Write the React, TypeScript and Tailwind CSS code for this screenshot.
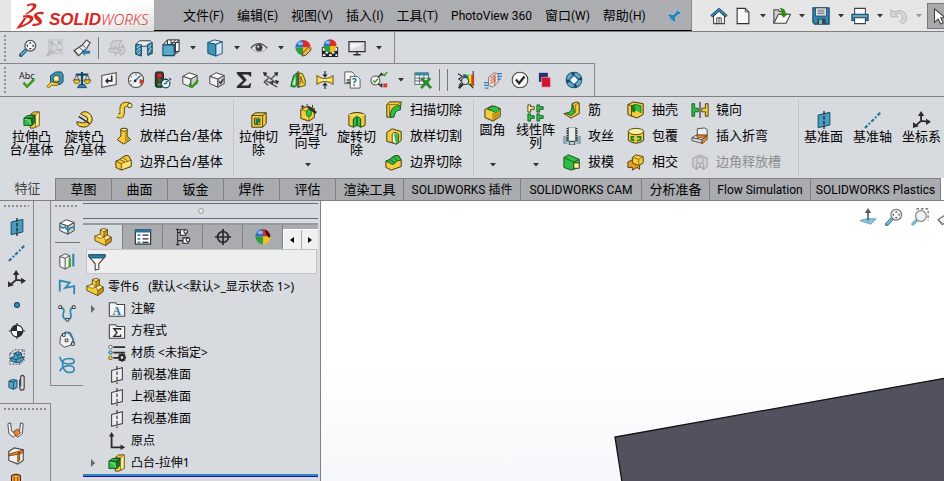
import React, { useState } from 'react';

const Y = '#f4cd3d';
const YD = '#c9941b';
const YL = '#fdf0a0';
const G = '#2fbf45';
const GD = '#14812a';
const B = '#2f88b0';
const BD = '#134a66';
const K = '#2b2b2b';

const Cube = ({ top = '#fff', left = '#f1f1f1', right = '#cfcfcf', line = '#444' }) => (
  <g stroke={line} strokeWidth="1.1" strokeLinejoin="round">
    <path d="M2 6 9 2l9 3-7 4z" fill={top} />
    <path d="M2 6l9 3v9l-9-4z" fill={left} />
    <path d="M11 9l7-4v9l-7 4z" fill={right} />
  </g>
);

const Lens = () => (
  <>
    <path d="M2 18l6.5-6.5" stroke={BD} strokeWidth="4" strokeLinecap="round" />
    <path d="M2.5 17.5l5-5" stroke="#58aed0" strokeWidth="2" strokeLinecap="round" />
    <circle cx="12.5" cy="7.5" r="6" fill="#f1f6f8" stroke="#555" strokeWidth="1.4" />
  </>
);

const Ball = () => (
  <>
    <path d="M10 9.5V1A8.5 8.5 0 0 0 1.5 9.5z" fill="#2a6ed0" />
    <path d="M10 9.5h8.5A8.5 8.5 0 0 0 10 1z" fill="#e02a25" />
    <path d="M10 9.5H1.5A8.5 8.5 0 0 0 10 18z" fill="#2c9f3c" />
    <path d="M10 9.5V18a8.5 8.5 0 0 0 8.5-8.5z" fill="#f3bd25" />
    <ellipse cx="7" cy="5" rx="3" ry="2" fill="#fff" opacity=".5" />
  </>
);

const Plane = () => (
  <>
    <path d="M3.5 4.5l13-3v14l-13 3z" fill="#4b9cc0" stroke={BD} strokeWidth="1.1" />
    <path d="M10 0v20" stroke="#111" strokeWidth="1.3" strokeDasharray="4 1.5" />
  </>
);

const Axes = () => (
  <g stroke={K} fill={K} strokeWidth="2">
    <path d="M9 11V3M9 11l9 1M9 11l-7 6" fill="none" />
    <path d="M5.5 5.500L9 0l3.500 5.500zM14.500 8.500l5.500 3.500-5.500 3.500zM0 12.500v6.500l6.500-2z" stroke="none" />
  </g>
);

const icons: Record<string, React.ReactNode> = {
  zoomFit: (
    <>
      <Lens />
      <path d="M12.500 3l1.600 2h-3.200zM12.500 12l1.600-2h-3.200zM8 7.500l2-1.600v3.200zM17 7.500l-2-1.600v3.200z" fill={K} />
    </>
  ),
  zoomArea: (
    <>
      <path d="M3 1h15v15H3z" fill="none" stroke="#b8bbbf" />
      <path d="M5 3l3 3M16 3l-3 3M16 14l-3-3M5 3h3M5 3v3M16 3h-3M16 3v3M16 14v-3" stroke="#b0b3b7" strokeWidth="1.400" />
      <path d="M2 18l5-5" stroke="#b8bbbf" strokeWidth="3.500" strokeLinecap="round" />
      <circle cx="9" cy="10" r="4" fill="#d2d4d8" stroke="#b8bbbf" strokeWidth="1.300" />
    </>
  ),
  prevView: (
    <>
      <path d="M1 13l9-6 5-6 4 3-4 7-9 7.500z" fill="#eee" stroke="#444" strokeWidth="1.200" />
      <path d="M1.500 13q2.500 1 4 4.500M7 9.500q2.500 1 4 4M10.500 7q2 .5 3.500 3" fill="none" stroke="#555" />
      <path d="M9 14.500l4.500-4v2.500H19v3.500h-5.500V19z" fill="#2b7ba6" />
    </>
  ),
  rotateGray: (
    <g stroke="#b3b6ba" fill="#cfd1d5" strokeWidth="1.200">
      <path d="M3 5l3-3h9l-2 3v5H3z" />
      <path d="M1 11h7v-3l4 5-4 5v-3H4q-3 0-3-4zM12 9h4V6l3 5q0 5-5 7l-2-3q3-1 3-3h-3z" />
    </g>
  ),
  section: (
    <>
      <path d="M1 6l4-4h12l3 3v10l-5 3V8H7v10l-6-1z" fill="#e9eef0" stroke={K} strokeWidth="1" />
      <path d="M1 6h6v13l-6-2zM14 6l5-2v12l-5 2z" fill={B} stroke={BD} />
      <path d="M2 10l4-4M2 14l4-4M3 17l3-3M15 10l3-4M15 15l3-5" stroke="#d5edf6" />
    </>
  ),
  viewCube: (
    <>
      <path d="M6 1h13v13h-5V6H6z" fill="#fff" stroke={K} strokeWidth="1.100" />
      <path d="M10 1v5M10 4h9M15 1l-4 5M15 4v12" stroke={K} />
      <path d="M1 6.500h12.500v12H1z" fill="#58a9ca" stroke={BD} strokeWidth="1.200" />
      <path d="M1 6.500l5-5.500M13.500 6.500L19 1M13.500 18l5.500-5" stroke={K} strokeWidth="1.100" />
    </>
  ),
  display: (
    <g stroke={BD} strokeLinejoin="round">
      <path d="M2 4l7-3 9 2-7 3z" fill="#dff2fa" />
      <path d="M2 4l9 2v13l-9-3z" fill="#3f94ba" />
      <path d="M11 6l7-3v13l-7 3z" fill="#cfe9f4" />
    </g>
  ),
  eye: (
    <>
      <path d="M1 10Q10 1 19 10 10 19 1 10z" fill="#e8e8e8" stroke="#999" />
      <path d="M1 10Q10 0 19 10" fill="none" stroke="#444" strokeWidth="1.300" />
      <circle cx="10" cy="9.500" r="4" fill="#444" />
      <circle cx="9" cy="8.500" r="1.200" fill="#ddd" />
    </>
  ),
  appearance: (
    <>
      <Ball />
      <path d="M9 19l1-4 6-6 3 3-6 6z" fill="#f0b93a" stroke="#4a3510" />
      <path d="M16 9l1-1.500 3 2.500-1 2z" fill="#dd6f7d" />
    </>
  ),
  ballBlack: (
    <>
      <Ball />
      <path d="M12 2q6 3 6 9-4-1-6-9z" fill="#111" />
    </>
  ),
  scene: (
    <>
      <path d="M1 9h18v11H1z" fill="#222" />
      <path d="M2 10h3v3H2zM15 10h3v3h-3zM5 14h3v2H5zM12 14h3v2h-3zM2 17h3v2H2zM9 17h3v2H9zM16 17h2v2h-2z" fill="#fff" />
      <g transform="translate(1.500 -.5) scale(.86)">
        <Ball />
      </g>
    </>
  ),
  monitor: (
    <>
      <path d="M1 3h18v11H1z" fill="#d9dbde" stroke="#333" strokeWidth="1.300" />
      <path d="M3 5h14L3 12z" fill="#f4f4f4" />
      <path d="M10 14v3M6 17.500h8" stroke={K} strokeWidth="1.600" />
    </>
  ),
  spell: (
    <>
      <text x="0" y="8.500" fontSize="10" fill="#222" fontFamily="Noto Sans, sans-serif">Abc</text>
      <path d="M5 13l4 4.500L17 9" fill="none" stroke="#3c9a1e" strokeWidth="2.800" />
    </>
  ),
  tape: (
    <>
      <path d="M5 5l6-4h6l2 3v8l-3 3H7l-2-2z" fill="#3c8fb5" stroke={BD} />
      <circle cx="11.500" cy="8.500" r="3.800" fill="#efd15a" stroke={BD} />
      <circle cx="11.500" cy="8.500" r="1.500" fill="#fff" />
      <path d="M1 17l5-5 9 2-2 2H6l-3 3z" fill={Y} stroke="#57430c" strokeWidth=".8" />
    </>
  ),
  scales: (
    <>
      <path d="M10 1v16M3 4h14" stroke={BD} strokeWidth="2.400" />
      <path d="M5 18.500h10l-2-3.500H7z" fill={B} stroke={BD} />
      <path d="M4 4L1.500 10h5zM16 4l-2.500 6h5z" fill="none" stroke="#555" />
      <path d="M0 10h8q-1 4-4 4t-4-4zM12 10h8q-1 4-4 4t-4-4z" fill={Y} stroke="#57430c" strokeWidth=".9" />
    </>
  ),
  sectionProp: (
    <>
      <path d="M2 5l16-3v13L2 18z" fill="#f4f4f4" stroke="#555" strokeWidth="1.300" />
      <path d="M13 5v6H8" fill="none" stroke={K} strokeWidth="1.800" />
      <path d="M9 7.500v7L5.500 11z" fill={K} />
    </>
  ),
  gauge: (
    <>
      <circle cx="10" cy="10" r="8.500" fill="#f3f3f3" stroke="#555" strokeWidth="1.300" />
      <path d="M10 3v2M4 6l1.500 1M3 11h2M5 15l1-1M15 15l-1-1" stroke={K} />
      <path d="M8 12l7-7" stroke="#2b7ba6" strokeWidth="1.800" />
      <path d="M14 9l4 1-1 5-3-2z" fill="#e02c1c" />
      <circle cx="9" cy="11" r="1.500" fill={K} />
    </>
  ),
  traffic: (
    <>
      <rect x="1.500" y="1" width="9" height="17" rx="2" fill="#3c3c3c" stroke="#111" />
      <circle cx="6" cy="5" r="2.600" fill="#e1281d" />
      <circle cx="6" cy="10" r="2" fill="#6b5b18" />
      <circle cx="6" cy="15" r="2" fill="#24a03b" />
      <circle cx="13" cy="14" r="4.700" fill="#f3f3f3" stroke={BD} strokeWidth="1.300" />
      <path d="M13 8v2M13 14l2-3M13 14h-2M17 8l2 2" stroke={BD} strokeWidth="1.400" />
    </>
  ),
  cubeCheck: (
    <>
      <Cube />
      <path d="M9 14l3.500 3.500L19 10" fill="none" stroke="#3c9a1e" strokeWidth="2.600" />
    </>
  ),
  cubeSmallCheck: (
    <>
      <Cube />
      <path d="M12.500 11.500l1.500 2 3-4.500" fill="none" stroke={K} strokeWidth="1.600" />
    </>
  ),
  sigma: <path d="M2 1h16v5h-1.500q-.5-2-3-2H8l5 6-6 6h6.500q2.500 0 3-2.500H18L17 19H2v-2L9 10.500 2 3z" fill={K} />,
  dimension: (
    <>
      <path d="M2 3l8 6 6-6M3 10l14 8M10 9l6 5M2 12l5 4M7 8l-5 5" stroke="#555" strokeWidth="1.500" fill="none" />
      <path d="M1 1l5 1-3 4zM13 2l5-1-1 5zM14 10l5 1-2 4zM8 12l5-1-1 4z" fill={K} />
    </>
  ),
  draftAnalysis: (
    <>
      <path d="M2 17l3-12 4-3v14l-3 2z" fill={G} stroke="#14501e" />
      <path d="M4 15l3-9v9z" fill="#eef7ee" />
      <path d="M11 2l4 1 3 7v6l-7 2z" fill={Y} stroke="#57430c" />
      <path d="M10 0v19" stroke={K} strokeWidth="1.200" />
      <path d="M13 6l3 8M13 6v8" stroke="#7b5c0f" />
    </>
  ),
  thickness: (
    <>
      <path d="M1 5q9 7 18 0v10q-9-7-18 0z" fill={Y} stroke="#57430c" strokeWidth=".9" />
      <path d="M2 10h16" stroke={YL} strokeWidth="1.500" />
      <path d="M10 0v5M10 20v-5" stroke={K} strokeWidth="1.400" />
      <path d="M7 4h6l-3 3.500zM7 16h6l-3-3.500z" fill={K} />
    </>
  ),
  compareDoc: (
    <>
      <path d="M2 1h8l3 3v10H2z" fill="#f5f5f5" stroke="#555" />
      <path d="M8 6h8l3 3v10H8z" fill="#f5f5f5" stroke="#555" />
      <path d="M4 10h4M4 12.500h4" stroke="#111" strokeWidth="1.300" />
      <text x="10" y="17" fontSize="11" fontWeight="700" fill="#1f6f99" fontFamily="Noto Sans, sans-serif">?</text>
    </>
  ),
  checkActive: (
    <>
      <circle cx="6" cy="10.500" r="5" fill="#f3f3f3" stroke="#555" strokeWidth="1.200" />
      <path d="M3.500 10.500l2 2 3.500-4" stroke="#3c9a1e" strokeWidth="1.600" fill="none" />
      <path d="M9 7l4-4M9 14l4 3M12 2l2 3M13 14v4" stroke={K} strokeWidth="1.600" />
      <path d="M14 3l2 2 3-4" stroke="#3c9a1e" strokeWidth="1.700" fill="none" />
      <path d="M15 14l4 4M19 14l-4 4" stroke="#dd3418" strokeWidth="2" />
    </>
  ),
  excel: (
    <>
      <path d="M1 2h15v13H1z" fill="#f7f7f7" stroke="#57646b" />
      <path d="M1 2h15v3H1z" fill={B} />
      <path d="M1 8h15M1 11h15M6 5v10M11 5v10" stroke="#57646b" />
      <path d="M8 8l11 11M18 8L8 19" stroke="#2d8a2b" strokeWidth="3" />
    </>
  ),
  rainbow: (
    <>
      <path d="M7 3l12 2v12L9 15z" fill="#46c349" />
      <path d="M7 4q3 0 5 2l-2 8-3-1z" fill="#2e4fc4" />
      <path d="M13 5l3-1v12l-3-2z" fill="#f2dd23" />
      <path d="M16 4l3 1v12l-3-2z" fill="#e4361d" />
      <path d="M1 3l5 3-4 3 4 3-4 4M18 0v5" stroke={K} fill="none" strokeWidth="1.200" />
      <path d="M2 19l5-5" stroke={K} strokeWidth="2.500" />
      <circle cx="9" cy="11" r="4" fill="#cfe0ea" stroke="#444" strokeWidth="1.300" />
      <path d="M14 14l4 5" stroke="#333" strokeWidth="1.500" />
    </>
  ),
  flow: (
    <>
      <path d="M5 7l6-5 5 1v9l-6 6-5-2z" fill="#f3d9cf" stroke="#777" />
      <path d="M7 8l6-4M7 11l6-4M7 14l6-4" stroke="#e0755b" strokeWidth="1.400" />
      <path d="M0 13h5M0 16h5M1 19h4M15 3h5M15 6h5M15 9h4" stroke="#2b82c7" strokeWidth="1.300" />
      <path d="M12 5v11" stroke="#666" />
    </>
  ),
  roundCheck: (
    <>
      <circle cx="10" cy="10" r="8.700" fill="#f7f7f7" stroke="#444" strokeWidth="1.200" />
      <path d="M5.500 9.500l3.500 4 6-7.500" fill="none" stroke={K} strokeWidth="2.600" />
    </>
  ),
  squares: (
    <>
      <path d="M1 2h10v10H1z" fill="#25306f" />
      <path d="M4 7h10v11H4z" fill="#cf1731" stroke="#e8dde2" strokeWidth=".6" />
    </>
  ),
  ring: (
    <>
      <circle cx="10" cy="10" r="6.500" fill="none" stroke={BD} strokeWidth="5.500" />
      <circle cx="10" cy="10" r="6.500" fill="none" stroke="#62a8c7" strokeWidth="3.500" strokeDasharray="7 3.200" />
      <path d="M10 5l5 5-5 5-5-5z" fill="#eef5f8" stroke={BD} />
    </>
  ),
  home: (
    <>
      <path d="M4 10v8.500h12V10l-6-6z" fill="#fff" stroke="#444" strokeWidth="1.200" />
      <path d="M7.500 18v-6h5v6M10 12v6" fill="none" stroke="#444" strokeWidth="1.100" />
      <path d="M1.500 10.500L10 3l8.500 7.500" fill="none" stroke={BD} strokeWidth="3.400" />
      <path d="M2 10L10 3l8 7" fill="none" stroke="#3b93bb" strokeWidth="1.500" />
    </>
  ),
  newDoc: (
    <>
      <path d="M3.500 1.500h9l4 4v13h-13z" fill="#f8f8f8" stroke="#333" strokeWidth="1.200" />
      <path d="M12.500 1.500v4h4" fill="none" stroke="#444" />
    </>
  ),
  open: (
    <>
      <path d="M1 18V3h5l1 2h5v5" fill="#cfd1d2" stroke="#444" strokeWidth="1.200" />
      <path d="M1 18L6 8h13.500l-5 10z" fill="#f6f6f6" stroke="#444" strokeWidth="1.200" />
      <path d="M7 1q7 0 7 6h3l-5 5-5-5h3q0-4-3-6z" fill="#358a14" />
    </>
  ),
  save: (
    <>
      <path d="M1 1h18v18H3l-2-2z" fill={B} stroke={BD} strokeWidth="1.300" />
      <path d="M4 1h12v9H4z" fill="#f5f5f5" stroke={BD} />
      <path d="M6 3.500h8M6 5.500h8M6 7.500h8" stroke="#555" />
      <path d="M6 13h9v6H6z" fill="#3b464c" />
      <path d="M8 14h3v5H8z" fill="#86b9d2" />
    </>
  ),
  print: (
    <>
      <path d="M4 8V1.500h12V8" fill="#f8f8f8" stroke="#444" strokeWidth="1.200" />
      <path d="M1 8h18v7H1z" fill={B} stroke={BD} strokeWidth="1.200" />
      <path d="M4 12h12v6.500H4z" fill="#fff" stroke="#444" strokeWidth="1.200" />
      <path d="M2 10h16" stroke="#9fd2e8" />
    </>
  ),
  undo: (
    <path d="M1 3v8h8L6 8q7-3 8 3 0 3-3 5l3 3q5-3 4-9Q16 1 4 5.500z" fill="#d7d8da" stroke="#aeb0b3" />
  ),
  cursor: <path d="M5 2v15l4-3.500 3 5.500 2.500-1.500L12 12h5z" fill="#fff" stroke="#444" strokeWidth="1.200" />,
  pin: (
    <path
      d="M11 2l6 4.500-1.500 2L14 8l-3.500 3.500.5 4.500-2 1-3-3-5 4 4-5.500-3-3 1.500-2 4.500 1L11.500 5z"
      fill="#2b82b5"
      stroke="#c5dbe8"
      strokeWidth=".7"
    />
  ),
  extrude: (
    <>
      <path d="M8 4l4-3h6v15l-6 3H8z" fill={Y} stroke="#4a390a" />
      <path d="M8 4h6v14l4-2V1l-4 3" stroke="#8c6b13" fill={YL} />
      <path d="M1 8l4-3h8l-3 3zM1 8h9v8H1z" fill={G} stroke="#104a1b" />
      <path d="M10 8l3-3v8l-3 3z" fill={GD} stroke="#104a1b" />
      <path d="M2 9l4 1 3 5" stroke="#9bec9c" fill="none" />
    </>
  ),
  revolve: (
    <>
      <path d="M5 3q4-4 9-1 6 5 3 11-5 7-13 4-4-2-3-5l5 1q5 1 7-3 0-4-3-4z" fill={Y} stroke="#4a390a" strokeWidth="1.100" />
      <path d="M3 6l12 8" stroke={K} strokeWidth="1.600" />
      <path d="M12 3q5 3 3 8" stroke={YL} fill="none" strokeWidth="1.300" />
    </>
  ),
  sweep: (
    <>
      <path d="M3 16q5 2 5-3 0-4 0-6 1-4 8-3" fill="none" stroke="#4a390a" strokeWidth="5.800" />
      <path d="M3 16q5 2 5-3 0-4 0-6 1-4 8-3" fill="none" stroke={Y} strokeWidth="4" />
      <circle cx="16.500" cy="5" r="2.500" fill={YL} stroke="#4a390a" />
      <path d="M7 9v5" stroke={YL} />
    </>
  ),
  loft: (
    <>
      <path d="M6.500 2h7v8l4 4-8 5-7-5 4-4z" fill={Y} stroke="#4a390a" strokeWidth="1.100" />
      <ellipse cx="10" cy="3" rx="3.500" ry="1.700" fill={YL} stroke="#4a390a" />
      <path d="M11 5v13l5-4-3-4V4z" fill={YD} />
    </>
  ),
  boundary: (
    <>
      <path d="M1 9q4-1 7-4t7-2l3 5v7l-11 4-6-3z" fill={Y} stroke="#4a390a" strokeWidth="1.100" />
      <path d="M1 9l6 3 11-4M7 12v7M5 7l6 3M9 5l5 4" fill="none" stroke="#6d540f" />
      <path d="M8 12l9-3v5l-9 4z" fill="#fae27a" />
    </>
  ),
  cutExtrude: (
    <>
      <path d="M2 5l4-3h12v12l-4 4H2z" fill={Y} stroke="#4a390a" strokeWidth="1.100" />
      <path d="M2 5h12v13M14 5l4-3" fill="none" stroke="#4a390a" />
      <path d="M5 8h6v7H5z" fill="#fff" stroke="#4a390a" />
      <path d="M6 15V9h5v3l-3 3z" fill={GD} />
    </>
  ),
  holeWizard: (
    <>
      <path d="M2 6l6-3 9 2v10l-6 4-9-3z" fill={Y} stroke="#4a390a" strokeWidth="1.100" />
      <path d="M2 6l9 3v10M11 9l6-4" fill="none" stroke="#8a6912" />
      <ellipse cx="11" cy="10" rx="3" ry="4" fill={G} stroke={GD} />
      <path d="M10 3l9 7" stroke={K} strokeWidth="2.800" />
      <path d="M4 1v4M2 3h4M9 0v3M15 1v3" stroke={K} />
    </>
  ),
  cutRevolve: (
    <>
      <path d="M1 4q9-5 18 0v12l-5 2V9l-4-3-4 3v9l-5-2z" fill={Y} stroke="#4a390a" strokeWidth="1.100" />
      <path d="M6 9l4-4v11l-4 2zM14 9l-4-4v11l4 2z" fill={G} stroke="#145a22" />
      <path d="M1 4q9 3 18 0" stroke={YL} fill="none" />
    </>
  ),
  sweepCut: (
    <>
      <path d="M2 4l3-3h13l-1 8-6 1-3 8H2z" fill={Y} stroke="#4a390a" strokeWidth="1.100" />
      <path d="M6 18Q5 5 17 5v5q-6 0-7 8z" fill={G} stroke="#145a22" />
      <path d="M2 4h13l3-3M5 5v12" fill="none" stroke="#8a6912" />
    </>
  ),
  loftCut: (
    <>
      <path d="M2 6l6-4 10 3v10l-5 4-11-3z" fill={Y} stroke="#4a390a" strokeWidth="1.100" />
      <path d="M8 8q3-4 7 0v9l-3 2-4-2z" fill="#f4f4f4" stroke="#4a390a" />
      <path d="M10 8q2-2 4 0l1 9-3 1z" fill={G} />
    </>
  ),
  boundaryCut: (
    <>
      <path d="M1 9q4-1 7-4t7-2l3 5v7l-11 4-6-3z" fill={Y} stroke="#4a390a" strokeWidth="1.100" />
      <path d="M1 9q4-1 7-4t7-2l3 5q-5 0-7 3t-4 1z" fill={G} stroke="#145a22" />
      <path d="M5 7l6 4M9 4l5 5" stroke="#145a22" />
    </>
  ),
  fillet: (
    <>
      <path d="M1 6l8-4 9 3v9l-8 5-9-4z" fill={Y} stroke="#4a390a" strokeWidth="1.100" />
      <path d="M4 6q5-5 10-3l4 3-5 4q-3-3-9-4z" fill={G} stroke="#145a22" />
      <path d="M10 10v9" stroke="#8a6912" />
      <path d="M11 11l6-4v6l-6 5z" fill={YD} />
    </>
  ),
  linearPattern: (
    <g strokeWidth="1">
      <path d="M1 1h3v2h4v3H4v3H1z" fill={YL} stroke="#4a390a" />
      <path d="M11 1h3v2h4v3h-4v3h-3zM1 11h3v2h4v3H4v3H1zM11 11h3v2h4v3h-4v3h-3z" fill={G} stroke="#145a22" />
    </g>
  ),
  rib: (
    <>
      <path d="M1 14l9-2V3l5-2 3 1v12l-9 5z" fill={Y} stroke="#4a390a" strokeWidth="1.100" />
      <path d="M4 14q6-2 7-10l2 9-4 3z" fill={G} stroke="#145a22" />
      <path d="M18 2l-4 2v9" stroke="#8a6912" fill="none" />
    </>
  ),
  tap: (
    <>
      <path d="M0 10h5v9H0zM15 10h5v9h-5z" fill="#8fa9b8" />
      <path d="M6 0h8v16H6z" fill="#e8e8e8" stroke="#777" />
      <path d="M5 1v15M15 1v15" stroke="#222" strokeWidth="2" strokeDasharray="1.600 1" />
      <path d="M7 16h6v4H7z" fill="#a7d6ec" stroke="#333" />
    </>
  ),
  draft: (
    <>
      <path d="M1 5l5-3 12 5v9l-9 3-8-3z" fill={G} stroke="#145a22" strokeWidth="1.100" />
      <path d="M1 5l11 5 6-3M12 10v8" fill="none" stroke="#145a22" />
      <path d="M12 11h6v6h-6z" fill={YL} stroke="#4a390a" />
    </>
  ),
  shell: (
    <>
      <path d="M1 4l6-3 11 2v12l-7 4-10-4z" fill={Y} stroke="#4a390a" strokeWidth="1.100" />
      <path d="M5 5l4-2 7 2v9l-6-4-2 3-3-2z" fill={GD} />
      <path d="M9 4l6 2v7l-6-4z" fill={G} />
      <path d="M1 4l4 1v12" fill="none" stroke="#4a390a" />
    </>
  ),
  wrap: (
    <>
      <path d="M1.500 5v10q8.500 6 17 0V5z" fill={Y} stroke="#4a390a" strokeWidth="1.100" />
      <ellipse cx="10" cy="5" rx="8.500" ry="3.500" fill={YL} stroke="#4a390a" />
      <path d="M4 10h4v2H6v1h2v3L4 15zM11 10h5v5l-5 1v-2h3v-2h-3z" fill={GD} />
    </>
  ),
  intersect: (
    <>
      <path d="M1 10l6-3 10 4-3 2v5l-3-2-5 3v-3H1z" fill="#ea9a22" stroke="#4a390a" />
      <path d="M6 5l4-3 8 2v7l-5 3-7-3z" fill={Y} stroke="#4a390a" />
      <path d="M6 5l7 2v7M13 7l5-3" stroke="#8a6912" fill="none" />
    </>
  ),
  mirror: (
    <>
      <path d="M1 3h3v5h4v4H4v5H1z" fill={G} stroke="#145a22" />
      <path d="M19 3h-3v5h-4v4h4v5h3z" fill={Y} stroke="#4a390a" />
      <path d="M10 1v18" stroke={K} strokeWidth="1.300" />
    </>
  ),
  bend: (
    <>
      <path d="M7 2l8-1 3 2v7l-9 1-2-3z" fill="#eee" stroke="#444" />
      <path d="M1 12l5-3h12l-6 5z" fill="#f4f4f4" stroke="#444" />
      <path d="M6 9h11l-1 2-9 1zM12 14l6-4v4l-6 5z" fill="#ea8a36" stroke="#6d3a0d" strokeWidth=".8" />
      <path d="M1 12l11 2v4L1 15z" fill="#ddd" stroke="#444" />
    </>
  ),
  corner: (
    <g fill="#d0d2d5" stroke="#a5a7aa" strokeWidth="1.200">
      <path d="M2 6l8-4 8 4v9l-4 3-4-3-4 3-4-3z" />
      <circle cx="10" cy="8" r="3.500" />
      <path d="M6 18v-7M14 18v-7M10 11v5" />
    </g>
  ),
  plane: <Plane />,
  axis: <path d="M1 19L18 2" stroke="#24769c" strokeWidth="2.400" strokeDasharray="4 2 2 2" />,
  axes: <Axes />,
  point: <circle cx="10" cy="10" r="2.700" fill="#3b93bb" stroke={BD} strokeWidth="1.300" />,
  com: (
    <>
      <path d="M10 1v18M1 10h18" stroke={K} strokeWidth="1.200" />
      <circle cx="10" cy="10" r="6.500" fill="#f8f8f8" stroke={K} strokeWidth="1.200" />
      <path d="M10 10V3.500A6.500 6.500 0 0 0 3.500 10zM10 10v6.500A6.500 6.500 0 0 0 16.500 10z" fill={K} />
    </>
  ),
  bound: (
    <>
      <path d="M2 6l5-4h11v12l-5 4H2zM2 6h11v12M13 6l5-4" fill="none" stroke="#444" strokeDasharray="2 1.500" />
      <path d="M3 11l4-2V6l4-2 4 2v3l2 1v3l-4 3H7l-4-2z" fill="#4f9fc3" stroke={BD} />
      <path d="M3 11l6 2 8-3M9 13v3M7 6l4 2 4-2M11 8v3" stroke={BD} fill="none" />
    </>
  ),
  clip: (
    <>
      <path d="M1 8l4-2 5 1v8l-4 2-5-2z" fill="#58a9ca" stroke={BD} />
      <path d="M1 8l5 1v8M6 9l4-2" stroke={BD} fill="none" />
      <path d="M13 6v9q0 3 2.500 3t2.500-3V4q0-2.500-2-2.500T14 4v10" fill="none" stroke="#444" strokeWidth="1.300" />
    </>
  ),
  weld1: (
    <>
      <path d="M1 3l3-1 1 9 5 4-3 3-5-4zM18 3l-3-1-1 9-5 4 3 3 5-4z" fill="#f1f1f1" stroke="#444" />
      <path d="M7 12l5-3 3 4-5 4z" fill="#ee8a2d" stroke="#70400c" />
    </>
  ),
  weld2: (
    <>
      <path d="M2 5l6-4 10 2v12l-6 4-10-4z" fill="#f1f1f1" stroke="#444" strokeWidth="1.200" />
      <path d="M2 8l10-3 2 1v9l-2 2V8L2 10zM13 5l5-2v3l-5 2z" fill="#ee8a2d" stroke="#70400c" />
    </>
  ),
  weld3: (
    <>
      <path d="M5 3q5-3 10 0v15H5z" fill="#f4a03c" stroke="#4a2f0a" strokeWidth="1.200" />
      <path d="M8 4v14M12 4v14" stroke="#70400c" />
    </>
  ),
  splitLine: (
    <>
      <Cube />
      <path d="M2 9l3 2 3-1 3 4 3-3 4-1" fill="none" stroke={B} strokeWidth="2" />
    </>
  ),
  project: (
    <>
      <path d="M2 5l6-3 5 2v12l-5 3-6-3z" fill="#f1f1f1" stroke="#444" />
      <path d="M2 5l6 2v12M8 7l5-3" stroke="#444" fill="none" />
      <path d="M13 7v10" stroke="#3aa51f" strokeWidth="2.400" />
      <path d="M17 2v14" stroke={B} strokeWidth="2.400" />
    </>
  ),
  composite: <path d="M1 14h1V3l11 2-5 6 10-2v9" fill="none" stroke={B} strokeWidth="2" />,
  curvePts: (
    <>
      <path d="M3 4q5 1 3 6-2 7 5 7 5-1 3-7-1-6 3-6" fill="none" stroke={B} strokeWidth="2" />
      <path d="M1 2h3v3H1zM16 2h3v3h-3zM9 16h3v3H9z" fill="#fff" stroke={K} />
    </>
  ),
  curveRef: (
    <>
      <path d="M3 7l5-5 6 1 3 7-3 7-7 2-5-4z" fill="#f1f1f1" stroke="#444" />
      <path d="M4 6q6-6 10 0t4 10" fill="none" stroke={B} strokeWidth="1.800" />
      <path d="M5 4h3v3H5zM8 10h3v3H8zM15 14h3v3h-3z" fill="#fff" stroke={K} />
    </>
  ),
  helix: (
    <path
      d="M2 1q1 5 5 7 11 2 11-2 0-4-8-3-5 0-5 6t5 9q8 1 8-3 0-5-8-4-6 1-8 6"
      fill="none"
      stroke={B}
      strokeWidth="1.800"
    />
  ),
  part: (
    <g stroke="#5c450c" strokeLinejoin="round">
      <path d="M1 9l6-2V2l4-1.500L15 2v6l4 2v5l-6 4.500L1 14z" fill={Y} />
      <path d="M7 2l4 2 4-2-4-1.500zM1 9l6-2 4 3-4 1.500zM11 10l4-2 4 2-6 4z" fill={YL} strokeWidth=".7" />
      <path d="M13 14v5.500l6-4.500v-5zM11 4v6l4-2V2z" fill={YD} strokeWidth=".7" />
    </g>
  ),
  props: (
    <>
      <path d="M1.500 2h17v16h-17z" fill="#fafafa" stroke="#333" strokeWidth="1.300" />
      <path d="M1 1.500h18V5H1z" fill="#2b7396" />
      <path d="M4 7h3v2H4zM4 11h3v2H4zM4 15h3v2H4z" fill={B} />
      <path d="M9.500 8H16M9.500 12H16M9.500 16H16" stroke={K} strokeWidth="1.300" />
    </>
  ),
  config: (
    <g fill="#f4f4f4" stroke={K} strokeWidth="1.200">
      <path d="M4 1v18M4 5h5M4 14h8" />
      <path d="M2 1.500h4M2 18.500h4" />
      <path d="M7 2h6v6H7zM10 11h6v6h-6z" />
      <circle cx="13" cy="4" r="2" />
      <circle cx="15.500" cy="13" r="2" />
    </g>
  ),
  target: (
    <g fill="none" stroke={K} strokeWidth="1.900">
      <circle cx="10" cy="10" r="6" />
      <path d="M10 1v18M1 10h18" />
    </g>
  ),
  funnel: (
    <>
      <path d="M1 2h18v2l-7 8v6l-4 1v-7L1 4z" fill="#f4f4f4" stroke="#444" strokeWidth="1.200" />
      <path d="M1 2h18v2l-1.500 1.500h-15L1 4z" fill="#2b82aa" stroke={BD} />
    </>
  ),
  noteFolder: (
    <>
      <path d="M1.500 18V3h7l1.500 2h8.500v13z" fill="#f3f3f3" stroke="#444" strokeWidth="1.200" />
      <text x="5" y="16.500" fontSize="13" fontWeight="700" fill="#2479a3" fontFamily="Liberation Serif, serif">A</text>
    </>
  ),
  eqFolder: (
    <>
      <path d="M1.500 18V3h7l1.500 2h8.500v13z" fill="#f3f3f3" stroke="#444" strokeWidth="1.200" />
      <path d="M14 9V7.500H6.500L10 12l-3.500 4H14v-2" fill="none" stroke={K} strokeWidth="1.500" />
    </>
  ),
  material: (
    <>
      <path d="M6 3.500h13M6 9.500h13M6 15.500h6" stroke={K} strokeWidth="2" />
      <circle cx="2.800" cy="3.500" r="2" fill="#fff" stroke="#555" />
      <circle cx="2.800" cy="9.500" r="2" fill="#7cc7ea" stroke="#39728c" />
      <circle cx="2.800" cy="15.500" r="2" fill={Y} stroke="#7a5a10" />
      <circle cx="15.500" cy="15" r="3" fill="#eee" stroke={K} strokeWidth="2.400" />
      <path d="M15.500 10v10M10.500 15h10M12 11.500l7 7M19 11.500l-7 7" stroke={K} strokeWidth="1.200" />
      <circle cx="15.500" cy="15" r="1.300" fill="#fff" />
    </>
  ),
  refPlane: (
    <>
      <path d="M4 5l12-3v13L4 18z" fill="#eceef0" stroke="#444" strokeWidth="1.200" />
      <path d="M10 0v20" stroke={K} strokeWidth="1.200" strokeDasharray="4 2" />
    </>
  ),
  origin: (
    <>
      <path d="M4 4v13h12" fill="none" stroke={K} strokeWidth="2" />
      <path d="M1 5l3-5 3 5zM14 14l5 3-5 3z" fill={K} />
    </>
  ),
  normalTo: (
    <>
      <path d="M1 14l7-2h11l-6 6z" fill="#6fb5d6" stroke="#3f87a8" />
      <path d="M10 14V4" stroke="#333" strokeWidth="1.800" />
      <path d="M6.500 5.500L10 0l3.500 5.500z" fill="#333" />
    </>
  ),
  zoomBox: (
    <>
      <path d="M6 1h13v13" fill="none" stroke="#333" strokeWidth="1.200" strokeDasharray="3 2" />
      <path d="M2 18l5-5" stroke="#5ea3c2" strokeWidth="3.500" strokeLinecap="round" />
      <circle cx="11" cy="9" r="6" fill="#e8eff3" stroke="#666" strokeWidth="1.300" />
    </>
  ),
};

const Icon = ({ name }: { name: string }) => (
  <svg viewBox="0 0 20 20" className="h-5 w-5 shrink-0 p-px" aria-hidden="true">
    {icons[name]}
  </svg>
);

const Caret = ({ muted = false }) => (
  <svg viewBox="0 0 6 4" className={`h-1 w-1.5 ${muted ? 'fill-[#999]' : 'fill-[#333]'}`} aria-hidden="true">
    <path d="M0 0h6L3 3.500z" />
  </svg>
);

const Tool = ({ name }: { name: string }) => (
  <button type="button" aria-label={name} className="flex h-7 w-[27px] shrink-0 items-center justify-center">
    <Icon name={name} />
  </button>
);

const Drop = ({ muted = false }) => (
  <button type="button" aria-label="more" className="flex h-7 w-[17px] shrink-0 items-center justify-center">
    <Caret muted={muted} />
  </button>
);

const Grip = () => (
  <div className="flex w-3.5 shrink-0 items-center pl-1">
    <div className="h-[26px] w-0.5 bg-[repeating-linear-gradient(#8d8f93_0_2px,transparent_2px_4px)]" />
  </div>
);

const GripH = () => (
  <div className="h-0.5 w-full shrink-0 bg-[repeating-linear-gradient(90deg,#8d8f93_0_2px,transparent_2px_4px)]" />
);

// '|' is a separator, 'v' a drop-down arrow
const ToolRow = ({ items }: { items: string[] }) => (
  <>
    {items.map((item, i) => {
      if (item === 'v') return <Drop key={i} />;
      if (item === '|') {
        return (
          <div key={i} className="flex w-2 shrink-0 items-center">
            <div className="ml-[3px] h-[22px] w-px bg-[#777]" />
          </div>
        );
      }
      return <Tool key={i} name={item} />;
    })}
  </>
);

const viewTools = ['zoomFit', 'zoomArea', 'prevView', '|', 'rotateGray', 'section', 'viewCube', 'v', 'display', 'v', 'eye', 'v', 'appearance', 'scene', 'monitor', 'v'];

const evalTools = [
  'spell', 'tape', 'scales', 'sectionProp', 'gauge', 'traffic', 'cubeCheck', 'cubeSmallCheck', 'sigma', 'dimension',
  'draftAnalysis', 'thickness', 'compareDoc', 'checkActive', 'v', 'excel', '|', '|', 'rainbow', 'flow', 'roundCheck', 'squares', 'ring',
];

const menus = [
  ['文件', '(F)'],
  ['编辑', '(E)'],
  ['视图', '(V)'],
  ['插入', '(I)'],
  ['工具', '(T)'],
  ['', 'PhotoView 360'],
  ['窗口', '(W)'],
  ['帮助', '(H)'],
];

const tabs = [
  { label: '特征', width: 'w-14' },
  { label: '草图', width: 'w-14' },
  { label: '曲面', width: 'w-14' },
  { label: '钣金', width: 'w-14' },
  { label: '焊件', width: 'w-14' },
  { label: '评估', width: 'w-14' },
  { label: '渲染工具', width: 'w-[68px]' },
  { label: 'SOLIDWORKS 插件', width: 'w-[117px]' },
  { label: 'SOLIDWORKS CAM', width: 'w-[121px]' },
  { label: '分析准备', width: 'w-[68px]' },
  { label: 'Flow Simulation', width: 'w-[101px]' },
  { label: 'SOLIDWORKS Plastics', width: 'w-[130px]' },
];

const treeItems = [
  { icon: 'noteFolder', label: '注解', arrow: true },
  { icon: 'eqFolder', label: '方程式' },
  { icon: 'material', label: '材质 <未指定>' },
  { icon: 'refPlane', label: '前视基准面' },
  { icon: 'refPlane', label: '上视基准面' },
  { icon: 'refPlane', label: '右视基准面' },
  { icon: 'origin', label: '原点' },
  { icon: 'extrude', label: '凸台-拉伸1', arrow: true },
];

const BigButton = ({ icon, label, width = 'w-[49px]', drop = false }: { icon: string; label: string; width?: string; drop?: boolean }) => (
  <button type="button" className={`flex h-[81px] shrink-0 flex-col items-center ${width} ${drop ? 'pt-1.5' : 'pt-[13px]'}`}>
    <Icon name={icon} />
    <span className="text-[13px] leading-[13px] whitespace-pre">{label}</span>
    {drop && (
      <span className="mt-auto pb-[11px]">
        <Caret />
      </span>
    )}
  </button>
);

const SmallColumn = ({ items, width }: { items: [string, string][]; width: string }) => (
  <div className={`flex shrink-0 flex-col ${width}`}>
    {items.map(([icon, label]) => (
      <button
        type="button"
        key={label}
        disabled={icon === 'corner'}
        className="flex h-[26px] items-center gap-1.5 text-[13px] whitespace-nowrap disabled:text-[#8c8e91]"
      >
        <Icon name={icon} />
        {label}
      </button>
    ))}
  </div>
);

const Divider = () => <div className="my-0.5 w-px shrink-0 bg-[#c0c3c8]" />;

const Logo = () => (
  <div className="flex w-[143px] shrink-0 items-center bg-linear-to-br from-white from-50% to-[#dcdcdc] pl-1 text-[#d6281e]">
    <svg viewBox="0 0 30 28" className="h-7 w-[30px] shrink-0" fill="currentColor" aria-label="DS">
      <path d="M12 2.500Q21-.5 21.500 3.500q0 4-10 9l-1.500-.5q8-5 8-8 0-1.500-6 .5z" />
      <path d="M8 13.500q10-1.500 10.500 2.500 0 6-17.500 11l8-11h2.500l-5 7.500q8.500-3.500 8.500-6.500 0-2-7-1.500z" />
      <path d="M29 10l-1 2.500q-6-1-6 .5l4 4q2 3 0 5-3 2.500-9 2l1-2.500q6 .5 6-1l-4-4q-2-3 0-5 3-2.500 9-1.500z" />
    </svg>
    <span className="flex items-baseline pt-2 pl-1 leading-5 italic">
      <span className="font-['Liberation_Sans',sans-serif] text-[17px] font-bold">SOLID</span>
      <span className="font-['Open_Sans',sans-serif] text-[15px] font-light">WORKS</span>
    </span>
  </div>
);

const App: React.FC = () => {
  const [activeTab, setActiveTab] = useState('特征');
  const [panel, setPanel] = useState('part');

  return (
    <div className="flex h-screen flex-col overflow-hidden bg-[#d7dadf] font-['Noto_Sans','Noto_Sans_CJK_SC',sans-serif] text-xs text-black">
      {/* Title bar */}
      <header className="flex h-8 shrink-0 overflow-hidden border-b border-[#808080] bg-[#e6e6e6] pl-[11px]">
        <Logo />
        <nav className="flex w-[538px] shrink-0 items-center gap-[13px] border-r border-b border-r-[#888] border-b-black bg-[#acadb1] pt-0.5 pl-[29px] font-['Roboto','Noto_Sans_CJK_SC',sans-serif]">
          {menus.map(([label, key]) => (
            <button type="button" key={key} className="shrink-0 whitespace-nowrap">
              <span className="text-[13px]">{label}</span>
              {key}
            </button>
          ))}
          <button type="button" aria-label="pin" className="ml-1.5 shrink-0">
            <Icon name="pin" />
          </button>
        </nav>
        <div className="flex items-center pl-[13px]">
          <Tool name="home" />
          {['newDoc', 'open', 'save', 'print', 'undo'].map((name) => (
            <div key={name} className="flex shrink-0 items-center">
              <button type="button" aria-label={name} className="flex w-[22px] justify-center">
                <Icon name={name} />
              </button>
              <Drop muted={name === 'undo'} />
            </div>
          ))}
          <button type="button" aria-label="select" className="flex h-[26px] w-9 shrink-0 items-center border border-[#777] bg-[#a8a9ab] pl-px">
            <Icon name="cursor" />
          </button>
        </div>
      </header>

      {/* Toolbars */}
      <div className="flex h-[31px] shrink-0">
        <div className="flex w-[395px] items-center border-r border-[#888]">
          <Grip />
          <ToolRow items={viewTools} />
        </div>
      </div>
      <div className="flex h-[34px] shrink-0 border-b border-[#808080]">
        <div className="flex w-[595px] items-center border-t border-r border-[#888]">
          <Grip />
          <ToolRow items={evalTools} />
        </div>
      </div>

      {/* Ribbon */}
      <div className="flex h-[81px] shrink-0 overflow-hidden pl-[5px]">
        <BigButton icon="extrude" label={'拉伸凸\n台/基体'} width="w-[53px]" />
        <BigButton icon="revolve" label={'旋转凸\n台/基体'} width="w-[53px]" />
        <div className="flex pl-[3px]">
          <SmallColumn width="w-[119px]" items={[['sweep', '扫描'], ['loft', '放样凸台/基体'], ['boundary', '边界凸台/基体']]} />
        </div>
        <Divider />
        <BigButton icon="cutExtrude" label={'拉伸切\n除'} />
        <BigButton icon="holeWizard" label={'异型孔\n向导'} drop />
        <BigButton icon="cutRevolve" label={'旋转切\n除'} />
        <div className="flex pl-[3px]">
          <SmallColumn width="w-[89px]" items={[['sweepCut', '扫描切除'], ['loftCut', '放样切割'], ['boundaryCut', '边界切除']]} />
        </div>
        <Divider />
        <BigButton icon="fillet" label="圆角" width="w-[37px]" drop />
        <BigButton icon="linearPattern" label={'线性阵\n列'} drop />
        <div className="flex pl-0.5">
          <SmallColumn width="w-16" items={[['rib', '筋'], ['tap', '攻丝'], ['draft', '拔模']]} />
          <SmallColumn width="w-16" items={[['shell', '抽壳'], ['wrap', '包覆'], ['intersect', '相交']]} />
          <SmallColumn width="w-[108px]" items={[['mirror', '镜向'], ['bend', '插入折弯'], ['corner', '边角释放槽']]} />
        </div>
        <Divider />
        <BigButton icon="plane" label="基准面" />
        <BigButton icon="axis" label="基准轴" />
        <BigButton icon="axes" label="坐标系" />
      </div>

      {/* Command tabs */}
      <div className="flex h-[23px] shrink-0 border-b border-[#808080] font-['Roboto','Noto_Sans_CJK_SC',sans-serif]">
        {tabs.map(({ label, width }) => (
          <button
            type="button"
            key={label}
            onClick={() => setActiveTab(label)}
            className={`shrink-0 overflow-hidden border-r border-[#808080] whitespace-nowrap ${width} ${
              /[A-Z]/.test(label) ? 'text-xs' : 'text-[13px]'
            } ${activeTab === label ? 'text-[#444]' : 'border-t bg-[#a9abaf]'}`}
          >
            {label}
          </button>
        ))}
        <div className="flex-1 bg-white" />
      </div>

      <div className="flex min-h-0 flex-1">
        {/* Reference geometry and weldment toolbars */}
        <aside className="flex w-[51px] shrink-0 flex-col">
          <div className="flex h-[202px] w-[34px] shrink-0 flex-col items-center border-r border-[#888] px-1 pt-1">
            <GripH />
            <div className="flex flex-col gap-1.5 pt-2.5">
              {['plane', 'axis', 'axes', 'point', 'com', 'bound', 'clip'].map((name) => (
                <button type="button" key={name} aria-label={name}>
                  <Icon name={name} />
                </button>
              ))}
            </div>
          </div>
          <div className="flex min-h-0 flex-1 flex-col overflow-hidden border-t border-r border-[#888] px-1 pt-1">
            <GripH />
            <div className="flex flex-col items-start gap-1.5 pt-2.5 pl-0.5">
              {['weld1', 'weld2', 'weld3'].map((name) => (
                <button type="button" key={name} aria-label={name}>
                  <Icon name={name} />
                </button>
              ))}
            </div>
          </div>
        </aside>

        {/* Curves toolbar */}
        <aside className="-ml-px flex w-[33px] shrink-0 flex-col">
          <div className="flex h-[185px] flex-col items-center border-b border-l border-[#888] pt-1">
            <div className="w-full px-1">
              <GripH />
            </div>
            <button type="button" aria-label="splitLine" className="pt-2.5">
              <Icon name="splitLine" />
            </button>
            <div className="mt-[5px] mb-2 h-px w-[25px] bg-[#777]" />
            <div className="flex flex-col gap-1.5">
              {['project', 'composite', 'curvePts', 'curveRef', 'helix'].map((name) => (
                <button type="button" key={name} aria-label={name}>
                  <Icon name={name} />
                </button>
              ))}
            </div>
          </div>
        </aside>

        {/* Feature tree */}
        <section className="flex w-[238px] shrink-0 flex-col border-r border-[#808080] pt-0.5 pr-0.5">
          <div className="flex h-4 shrink-0 items-center justify-center border-y border-[#5f6b85]">
            <span className="h-1.5 w-1.5 rounded-full border border-[#999] bg-[#e8e8e8]" />
          </div>
          <div className="mt-1 flex h-[26px] shrink-0 border-t-2 border-[#97999d] bg-[#a9abaf]">
            {['part', 'props', 'config', 'target', 'ballBlack'].map((name) => (
              <button
                type="button"
                key={name}
                aria-label={name}
                onClick={() => setPanel(name)}
                className={`flex w-10 shrink-0 items-center justify-center border-r border-[#808080] ${panel === name ? 'bg-[#d7dadf]' : ''}`}
              >
                <Icon name={name} />
              </button>
            ))}
            <div className="mt-1 flex flex-1 border-t border-l border-white bg-[#f0f0f0]">
              <button type="button" aria-label="previous tabs" className="flex flex-1 items-center justify-center border-r border-[#aaa]">
                <svg viewBox="0 0 4 6" className="h-1.5 w-1"><path d="M4 0v6L0 3z" /></svg>
              </button>
              <button type="button" aria-label="next tabs" className="flex flex-1 items-center justify-center">
                <svg viewBox="0 0 4 6" className="h-1.5 w-1"><path d="M0 0v6l4-3z" /></svg>
              </button>
            </div>
          </div>
          <label className="mr-px ml-[3px] flex h-[25px] shrink-0 items-center border border-[#c2c4c8] bg-[#eee]">
            <Icon name="funnel" />
            <input type="text" aria-label="filter" className="min-w-0 flex-1 bg-transparent outline-none" />
          </label>
          <div className="flex h-[22px] shrink-0 items-center gap-[3px] pt-1 pl-0.5 whitespace-pre">
            <Icon name="part" />
            {'零件6   (默认<<默认>_显示状态 1>)'}
          </div>
          <ul className="pt-0.5">
            {treeItems.map(({ icon, label, arrow }) => (
              <li key={label} className="flex h-[22px] items-center whitespace-nowrap">
                <span className="flex w-6 justify-start pl-2">
                  {arrow && (
                    <svg viewBox="0 0 4 8" className="h-2 w-1 fill-[#666]"><path d="M0 0v8l4-4z" /></svg>
                  )}
                </span>
                <Icon name={icon} />
                <span className="pl-1">{label}</span>
              </li>
            ))}
          </ul>
          <div className="h-[3px] shrink-0 border-b border-[#26148c] bg-[#2e86c8]" />
        </section>

        {/* Graphics area */}
        <main className="relative min-w-0 flex-1 overflow-hidden bg-linear-to-b from-white from-55% to-[#f6f7fa]">
          <svg viewBox="0 0 623 280" preserveAspectRatio="xMinYMin slice" className="absolute inset-0 h-full w-full">
            <path d="M301 281L294 236 625 177v104z" fill="#51525d" stroke="#111" strokeWidth="1.300" />
          </svg>
          <div className="absolute top-1.5 -right-3 flex gap-1.5">
            {['normalTo', 'zoomFit', 'zoomBox', 'prevView'].map((name) => (
              <button type="button" key={name} aria-label={name} className="opacity-80">
                <Icon name={name} />
              </button>
            ))}
          </div>
        </main>
      </div>
    </div>
  );
};

export default App;
